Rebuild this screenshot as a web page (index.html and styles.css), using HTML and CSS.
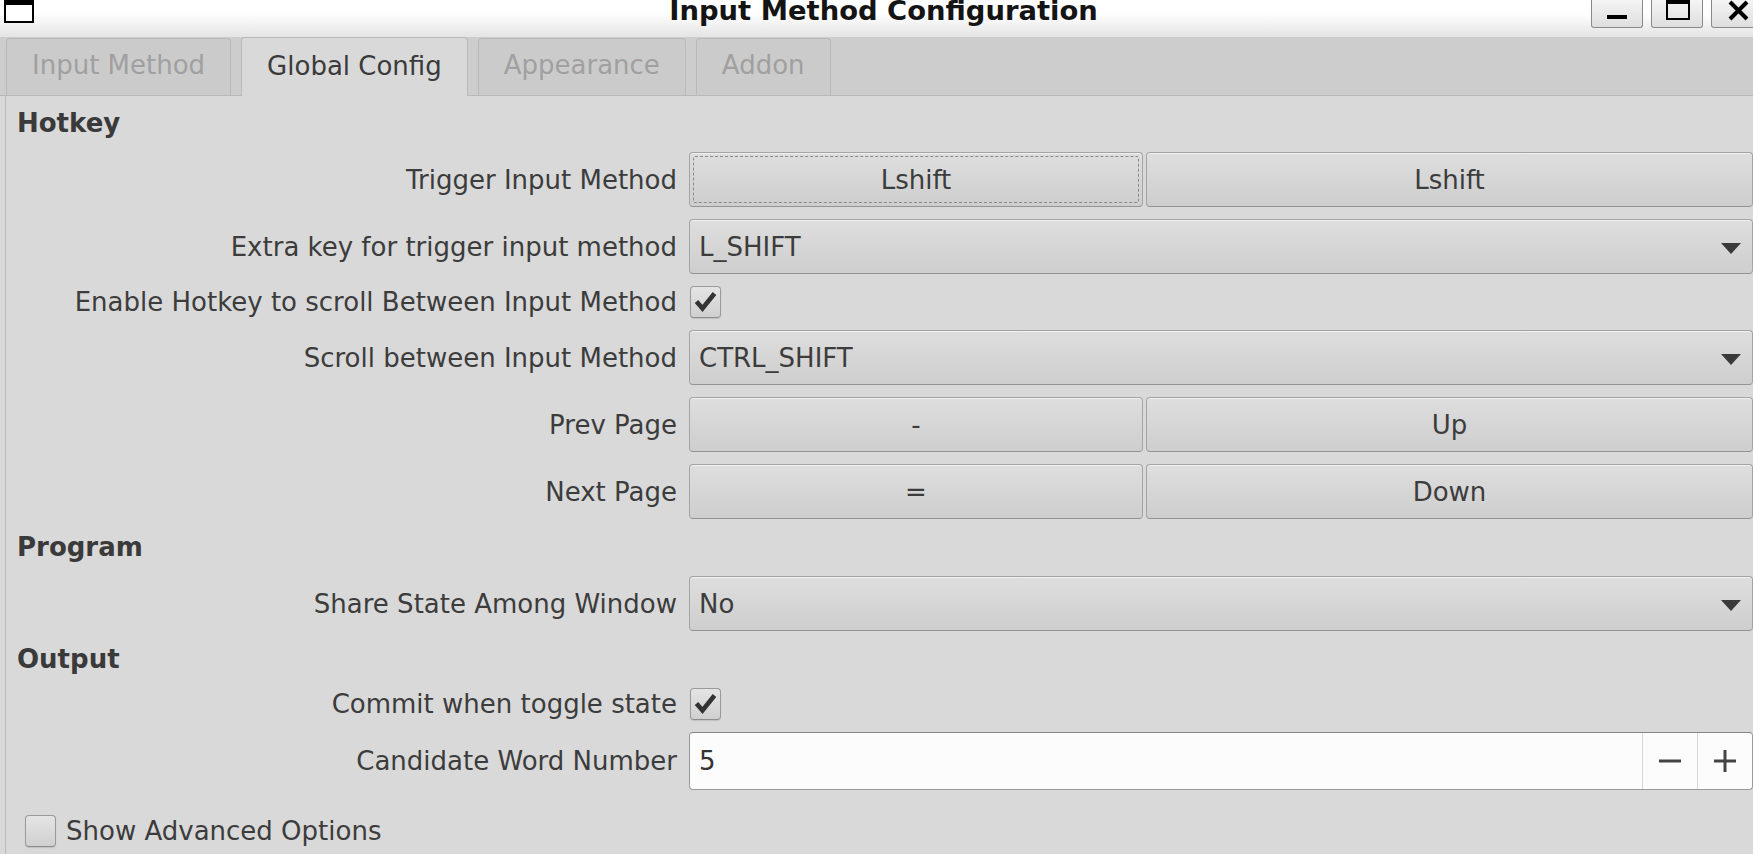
FILE: index.html
```html
<!DOCTYPE html>
<html lang="en">
<head>
<meta charset="utf-8">
<title>Input Method Configuration</title>
<link rel="stylesheet" href="styles.css">
</head>
<body>
<div class="window">
  <header class="titlebar">
    <div class="win-icon"></div>
    <div class="title">Input Method Configuration</div>
    <div class="controls">
      <div class="ctl">
        <svg width="52" height="28" viewBox="0 0 52 28"><rect x="16" y="16" width="20" height="4" fill="#000"/></svg>
      </div>
      <div class="ctl">
        <svg width="52" height="28" viewBox="0 0 52 28"><rect x="15" y="0" width="24" height="5" fill="#000"/><rect x="15" y="0" width="2" height="21" fill="#000"/><rect x="37" y="0" width="2" height="21" fill="#000"/><rect x="15" y="19" width="24" height="2" fill="#000"/></svg>
      </div>
      <div class="ctl">
        <svg width="52" height="28" viewBox="0 0 52 28"><path d="M19 3 L36 20 M36 3 L19 20" stroke="#000" stroke-width="4" fill="none"/></svg>
      </div>
    </div>
  </header>

  <nav class="tabbar">
    <div class="tab">Input Method</div>
    <div class="tab active">Global Config</div>
    <div class="tab">Appearance</div>
    <div class="tab">Addon</div>
  </nav>

  <main class="panel">
    <div class="form">
      <div class="section">Hotkey</div>

      <div class="label">Trigger Input Method</div>
      <div class="btn-pair">
        <div class="btn focused">Lshift</div>
        <div class="btn">Lshift</div>
      </div>

      <div class="label">Extra key for trigger input method</div>
      <div class="combo"><span>L_SHIFT</span><span class="arrow"></span></div>

      <div class="label">Enable Hotkey to scroll Between Input Method</div>
      <div class="check-cell"><div class="check checked"><svg width="29" height="30" viewBox="0 0 29 30"><path d="M5.5 14.5 L11.5 21.5 L23.5 6.5" stroke="#333" stroke-width="4.6" fill="none" stroke-linejoin="miter"/></svg></div></div>

      <div class="label">Scroll between Input Method</div>
      <div class="combo"><span>CTRL_SHIFT</span><span class="arrow"></span></div>

      <div class="label">Prev Page</div>
      <div class="btn-pair">
        <div class="btn">-</div>
        <div class="btn">Up</div>
      </div>

      <div class="label">Next Page</div>
      <div class="btn-pair">
        <div class="btn">=</div>
        <div class="btn">Down</div>
      </div>

      <div class="section">Program</div>

      <div class="label">Share State Among Window</div>
      <div class="combo"><span>No</span><span class="arrow"></span></div>

      <div class="section">Output</div>

      <div class="label">Commit when toggle state</div>
      <div class="check-cell"><div class="check checked"><svg width="29" height="30" viewBox="0 0 29 30"><path d="M5.5 14.5 L11.5 21.5 L23.5 6.5" stroke="#333" stroke-width="4.6" fill="none" stroke-linejoin="miter"/></svg></div></div>

      <div class="label">Candidate Word Number</div>
      <div class="spin">
        <div class="spin-value">5</div>
        <div class="spin-btn"><svg width="24" height="24" viewBox="0 0 24 24"><rect x="1" y="10.5" width="22" height="3" fill="#444"/></svg></div>
        <div class="spin-btn"><svg width="24" height="24" viewBox="0 0 24 24"><rect x="1" y="10.5" width="22" height="3" fill="#444"/><rect x="10.5" y="1" width="3" height="22" fill="#444"/></svg></div>
      </div>
    </div>

    <div class="advanced">
      <div class="check"></div>
      <span>Show Advanced Options</span>
    </div>
  </main>
</div>
</body>
</html>
```

FILE: styles.css
```css
* { box-sizing: border-box; }

html, body {
  margin: 0;
  padding: 0;
}

body {
  width: 1753px;
  height: 854px;
  overflow: hidden;
  background: #d9d9d9;
  font-family: "DejaVu Sans", "Liberation Sans", sans-serif;
  font-size: 26px;
  color: #3c3c3c;
}

.window {
  display: flex;
  flex-direction: column;
  height: 854px;
}

/* Title bar */
.titlebar {
  flex: none;
  height: 37px;
  display: grid;
  grid-template-columns: 1fr auto 1fr;
  align-items: start;
  background: linear-gradient(#ffffff 0%, #ffffff 35%, #e4e4e4 100%);
}

.win-icon {
  margin-left: 4px;
  width: 30px;
  height: 23px;
  border: 2px solid #000;
  border-top-width: 5px;
  background: #fff;
}

.title {
  font-weight: bold;
  font-size: 27.4px;
  line-height: 27px;
  color: #141414;
  margin-top: -3px;
  padding-left: 14px;
  white-space: nowrap;
}

.controls {
  justify-self: end;
  margin-right: -10px;
  display: flex;
  gap: 8px;
}

.ctl {
  width: 52px;
  height: 28px;
  border: 1px solid #8a8a8a;
  border-top: none;
  border-radius: 0 0 3px 3px;
  background: linear-gradient(#f4f4f4, #dedede);
  overflow: hidden;
}

.ctl svg {
  display: block;
  margin: -1px 0 0 -1px;
}

/* Tabs */
.tabbar {
  flex: none;
  height: 59px;
  display: flex;
  align-items: flex-end;
  gap: 10px;
  padding-left: 6px;
  background: #cdcdcd;
  border-bottom: 1px solid #b9b9b9;
}

.tab {
  height: 57px;
  padding: 0 25px 5px;
  display: flex;
  align-items: center;
  border: 1px solid #b9b9b9;
  border-bottom: none;
  border-radius: 4px 4px 0 0;
  background: #cbcbcb;
  color: #a0a0a0;
  white-space: nowrap;
}

.tab.active {
  height: 59px;
  margin-bottom: -1px;
  padding-bottom: 2px;
  background: #d9d9d9;
  color: #3a3a3a;
}

/* Panel */
.panel {
  flex: 1;
  margin-left: 5px;
  border-left: 1px solid #b9b9b9;
  padding: 11px 0 0 11px;
}

.form {
  display: grid;
  grid-template-columns: 660px 1fr;
  column-gap: 12px;
  row-gap: 12px;
  align-items: center;
}

.section {
  grid-column: 1 / -1;
  height: 33px;
  line-height: 33px;
  font-weight: bold;
  color: #3a3a3a;
}

.label {
  text-align: right;
  white-space: nowrap;
  line-height: 30px;
}

.btn-pair {
  display: grid;
  grid-template-columns: 454px 1fr;
  gap: 3px;
}

.btn,
.combo {
  position: relative;
  height: 55px;
  border: 1px solid #a4a4a4;
  border-bottom-color: #939393;
  border-radius: 4px;
  background: linear-gradient(#dedede, #cecece);
  box-shadow: inset 0 1px 0 rgba(255, 255, 255, 0.55);
  display: flex;
  align-items: center;
  color: #3c3c3c;
}

.btn {
  justify-content: center;
}

.btn.focused::after {
  content: "";
  position: absolute;
  inset: 3px;
  border: 1px dashed #8a8a8a;
  border-radius: 2px;
}

.combo {
  justify-content: space-between;
  padding: 0 11px 0 9px;
}

.arrow {
  width: 0;
  height: 0;
  border-left: 10px solid transparent;
  border-right: 10px solid transparent;
  border-top: 11px solid #3a3a3a;
  margin-top: 4px;
}

.check-cell {
  display: flex;
  padding-left: 1px;
}

.check {
  width: 31px;
  height: 32px;
  border: 1px solid #9a9a9a;
  border-bottom-color: #8c8c8c;
  border-radius: 4px;
  background: linear-gradient(#e4e4e4, #d0d0d0);
  box-shadow: 0 1px 1px rgba(0, 0, 0, 0.12);
  flex: none;
}

.check svg {
  display: block;
}

.spin {
  height: 58px;
  display: flex;
  border: 1px solid #9a9a9a;
  border-top-color: #858585;
  border-radius: 4px;
  background: #fcfcfc;
}

.spin-value {
  flex: 1;
  display: flex;
  align-items: center;
  padding-left: 9px;
  color: #333;
}

.spin-btn {
  width: 55px;
  border-left: 1px solid #d6d6d6;
  display: flex;
  align-items: center;
  justify-content: center;
}

.spin-btn svg {
  display: block;
}

.advanced {
  margin-top: 25px;
  padding-left: 8px;
  display: flex;
  align-items: center;
  gap: 10px;
  line-height: 32px;
}
```
